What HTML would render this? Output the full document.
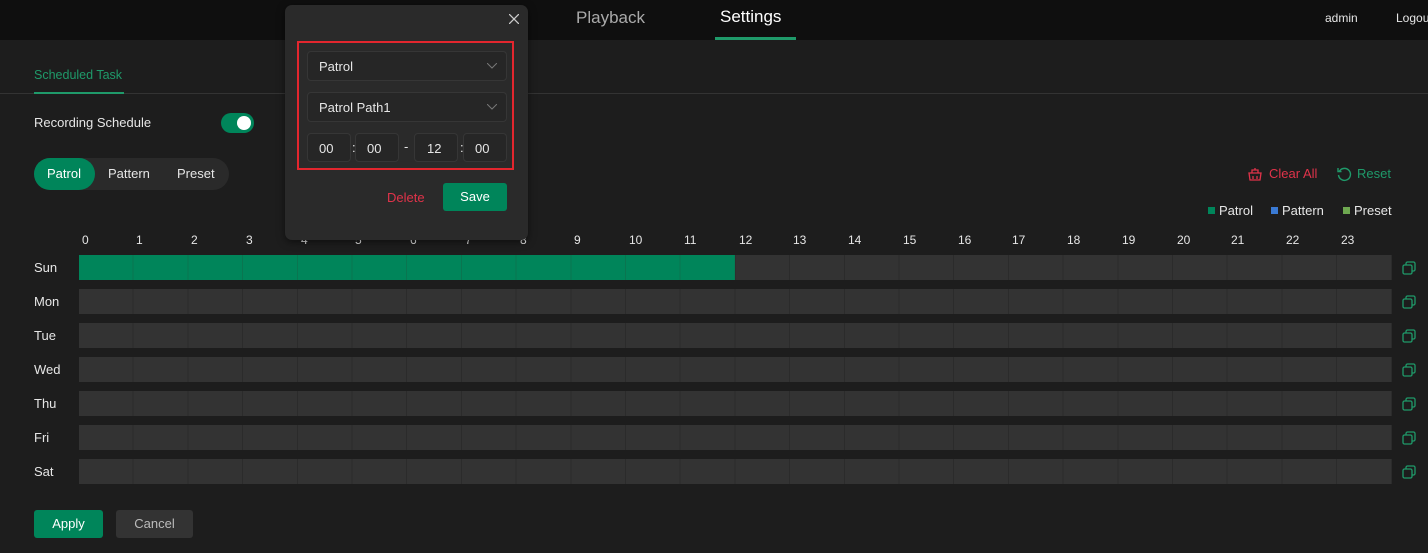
<!DOCTYPE html>
<html><head><meta charset="utf-8"><style>
*{margin:0;padding:0;box-sizing:border-box}
body{width:1428px;height:553px;background:#1d1d1d;font-family:"Liberation Sans",sans-serif;color:#e6e6e6;position:relative;overflow:hidden;font-size:13px}
.a{position:absolute;white-space:nowrap}
.top{left:0;top:0;width:1428px;height:40px;background:#0f0f0f}
.row{position:absolute;left:79px;width:1313px;height:25px;background:#333 repeating-linear-gradient(90deg,transparent 0 53.7px,#2b2b2b 53.7px 54.7px)}
.day{position:absolute;left:34px;font-size:13px}
.cp{position:absolute;left:1402px;width:14px;height:14px}
.h{position:absolute;top:233px;font-size:12px;margin-left:3px}
.sel{position:absolute;background:#262626;border:1px solid #363636;border-radius:4px;height:30px}
</style></head><body>
<div class="a top"></div>
<div class="a" style="left:576px;top:8px;font-size:17px;color:#aaa">Playback</div>
<div class="a" style="left:720px;top:7px;font-size:17px;color:#fff">Settings</div>
<div class="a" style="left:715px;top:37px;width:81px;height:3px;background:#1f9a6a"></div>
<div class="a" style="left:1325px;top:11px;font-size:12px">admin</div>
<div class="a" style="left:1396px;top:11px;font-size:12px">Logout</div>

<div class="a" style="left:34px;top:68px;color:#1f9a6a;font-size:12.5px">Scheduled Task</div>
<div class="a" style="left:0;top:93px;width:1428px;height:1px;background:#333"></div>
<div class="a" style="left:34px;top:92px;width:90px;height:2px;background:#1f9a6a"></div>
<div class="a" style="left:34px;top:115px">Recording Schedule</div>
<div class="a" style="left:221px;top:113px;width:33px;height:20px;border-radius:10px;background:#00855a"><div style="position:absolute;right:3px;top:3px;width:14px;height:14px;border-radius:50%;background:#fff"></div></div>

<div class="a" style="left:34px;top:158px;width:195px;height:32px;border-radius:16px;background:#2a2a2a"></div>
<div class="a" style="left:34px;top:158px;width:61px;height:32px;border-radius:16px;background:#00855a"></div>
<div class="a" style="left:47px;top:166px;color:#fff">Patrol</div>
<div class="a" style="left:108px;top:166px">Pattern</div>
<div class="a" style="left:177px;top:166px">Preset</div>

<svg class="a" style="left:1247px;top:166px" width="16" height="16" viewBox="0 0 16 16" fill="none" stroke="#e0334a" stroke-width="1.3"><path d="M2 7h12l-1 7H3z M5 7V4h6v3 M8 2v2 M6 10v3 M10 10v3"/></svg>
<div class="a" style="left:1269px;top:166px;color:#e0334a">Clear All</div>
<svg class="a" style="left:1336px;top:166px" width="16" height="16" viewBox="0 0 16 16" fill="none" stroke="#1f9a6a" stroke-width="1.4"><path d="M3.5 5A6 6 0 1 1 2.5 9 M2 2v3.5h3.5"/></svg>
<div class="a" style="left:1357px;top:166px;color:#1f9a6a">Reset</div>

<div class="a" style="left:1208px;top:207px;width:7px;height:7px;background:#00855a"></div>
<div class="a" style="left:1219px;top:203px">Patrol</div>
<div class="a" style="left:1271px;top:207px;width:7px;height:7px;background:#3a7ad4"></div>
<div class="a" style="left:1282px;top:203px">Pattern</div>
<div class="a" style="left:1343px;top:207px;width:7px;height:7px;background:#6ea850"></div>
<div class="a" style="left:1354px;top:203px">Preset</div>

<div class="h" style="left:79px">0</div><div class="h" style="left:133px">1</div><div class="h" style="left:188px">2</div><div class="h" style="left:243px">3</div><div class="h" style="left:298px">4</div><div class="h" style="left:352px">5</div><div class="h" style="left:407px">6</div><div class="h" style="left:462px">7</div><div class="h" style="left:517px">8</div><div class="h" style="left:571px">9</div><div class="h" style="left:626px">10</div><div class="h" style="left:681px">11</div><div class="h" style="left:736px">12</div><div class="h" style="left:790px">13</div><div class="h" style="left:845px">14</div><div class="h" style="left:900px">15</div><div class="h" style="left:955px">16</div><div class="h" style="left:1009px">17</div><div class="h" style="left:1064px">18</div><div class="h" style="left:1119px">19</div><div class="h" style="left:1174px">20</div><div class="h" style="left:1228px">21</div><div class="h" style="left:1283px">22</div><div class="h" style="left:1338px">23</div>

<div class="day" style="top:260px">Sun</div><div class="row" style="top:255px"><div style="position:absolute;left:0;top:0;width:656px;height:25px;background:#00855a repeating-linear-gradient(90deg,transparent 0 53.7px,#0a7550 53.7px 54.7px)"></div></div>
<div class="day" style="top:294px">Mon</div><div class="row" style="top:289px"></div>
<div class="day" style="top:328px">Tue</div><div class="row" style="top:323px"></div>
<div class="day" style="top:362px">Wed</div><div class="row" style="top:357px"></div>
<div class="day" style="top:396px">Thu</div><div class="row" style="top:391px"></div>
<div class="day" style="top:430px">Fri</div><div class="row" style="top:425px"></div>
<div class="day" style="top:464px">Sat</div><div class="row" style="top:459px"></div>

<svg class="cp" style="top:261px" viewBox="0 0 14 14" fill="none" stroke="#1f9a6a" stroke-width="1.3"><rect x="1" y="4" width="9" height="9" rx="1.5"/><path d="M4 4V2.5A1.5 1.5 0 0 1 5.5 1h6A1.5 1.5 0 0 1 13 2.5v6a1.5 1.5 0 0 1-1.5 1.5H10"/></svg>
<svg class="cp" style="top:295px" viewBox="0 0 14 14" fill="none" stroke="#1f9a6a" stroke-width="1.3"><rect x="1" y="4" width="9" height="9" rx="1.5"/><path d="M4 4V2.5A1.5 1.5 0 0 1 5.5 1h6A1.5 1.5 0 0 1 13 2.5v6a1.5 1.5 0 0 1-1.5 1.5H10"/></svg>
<svg class="cp" style="top:329px" viewBox="0 0 14 14" fill="none" stroke="#1f9a6a" stroke-width="1.3"><rect x="1" y="4" width="9" height="9" rx="1.5"/><path d="M4 4V2.5A1.5 1.5 0 0 1 5.5 1h6A1.5 1.5 0 0 1 13 2.5v6a1.5 1.5 0 0 1-1.5 1.5H10"/></svg>
<svg class="cp" style="top:363px" viewBox="0 0 14 14" fill="none" stroke="#1f9a6a" stroke-width="1.3"><rect x="1" y="4" width="9" height="9" rx="1.5"/><path d="M4 4V2.5A1.5 1.5 0 0 1 5.5 1h6A1.5 1.5 0 0 1 13 2.5v6a1.5 1.5 0 0 1-1.5 1.5H10"/></svg>
<svg class="cp" style="top:397px" viewBox="0 0 14 14" fill="none" stroke="#1f9a6a" stroke-width="1.3"><rect x="1" y="4" width="9" height="9" rx="1.5"/><path d="M4 4V2.5A1.5 1.5 0 0 1 5.5 1h6A1.5 1.5 0 0 1 13 2.5v6a1.5 1.5 0 0 1-1.5 1.5H10"/></svg>
<svg class="cp" style="top:431px" viewBox="0 0 14 14" fill="none" stroke="#1f9a6a" stroke-width="1.3"><rect x="1" y="4" width="9" height="9" rx="1.5"/><path d="M4 4V2.5A1.5 1.5 0 0 1 5.5 1h6A1.5 1.5 0 0 1 13 2.5v6a1.5 1.5 0 0 1-1.5 1.5H10"/></svg>
<svg class="cp" style="top:465px" viewBox="0 0 14 14" fill="none" stroke="#1f9a6a" stroke-width="1.3"><rect x="1" y="4" width="9" height="9" rx="1.5"/><path d="M4 4V2.5A1.5 1.5 0 0 1 5.5 1h6A1.5 1.5 0 0 1 13 2.5v6a1.5 1.5 0 0 1-1.5 1.5H10"/></svg>

<div class="a" style="left:34px;top:510px;width:69px;height:28px;border-radius:3px;background:#00855a;color:#fff;text-align:center;line-height:28px">Apply</div>
<div class="a" style="left:116px;top:510px;width:77px;height:28px;border-radius:3px;background:#333;color:#bbb;text-align:center;line-height:28px">Cancel</div>

<div class="a" style="left:285px;top:5px;width:243px;height:235px;border-radius:7px;background:#2a2a2a;box-shadow:0 2px 8px rgba(0,0,0,.5)">
 <svg style="position:absolute;left:224px;top:9px" width="10" height="10" viewBox="0 0 10 10" stroke="#ccc" stroke-width="1.3"><path d="M0 0L10 10M10 0L0 10"/></svg>
 <div style="position:absolute;left:12px;top:36px;width:217px;height:129px;border:2px solid #e3262e"></div>
 <div class="sel" style="left:22px;top:46px;width:200px"><span style="position:absolute;left:11px;top:7px">Patrol</span><svg style="position:absolute;right:9px;top:11px" width="10" height="6" viewBox="0 0 10 6" fill="none" stroke="#777"><path d="M0 0l5 5 5-5"/></svg></div>
 <div class="sel" style="left:22px;top:87px;width:200px"><span style="position:absolute;left:11px;top:7px">Patrol Path1</span><svg style="position:absolute;right:9px;top:11px" width="10" height="6" viewBox="0 0 10 6" fill="none" stroke="#777"><path d="M0 0l5 5 5-5"/></svg></div>
 <div class="sel" style="left:22px;top:128px;width:44px;height:29px"><span style="position:absolute;left:11px;top:7px">00</span></div>
 <span style="position:absolute;left:67px;top:135px">:</span>
 <div class="sel" style="left:70px;top:128px;width:44px;height:29px"><span style="position:absolute;left:11px;top:7px">00</span></div>
 <span style="position:absolute;left:119px;top:134px">-</span>
 <div class="sel" style="left:129px;top:128px;width:44px;height:29px"><span style="position:absolute;left:12px;top:7px">12</span></div>
 <span style="position:absolute;left:175px;top:135px">:</span>
 <div class="sel" style="left:178px;top:128px;width:44px;height:29px"><span style="position:absolute;left:11px;top:7px">00</span></div>
 <span style="position:absolute;left:102px;top:185px;color:#e0334a">Delete</span>
 <div style="position:absolute;left:158px;top:178px;width:64px;height:28px;border-radius:3px;background:#00855a;color:#fff;text-align:center;line-height:28px">Save</div>
</div>
</body></html>
